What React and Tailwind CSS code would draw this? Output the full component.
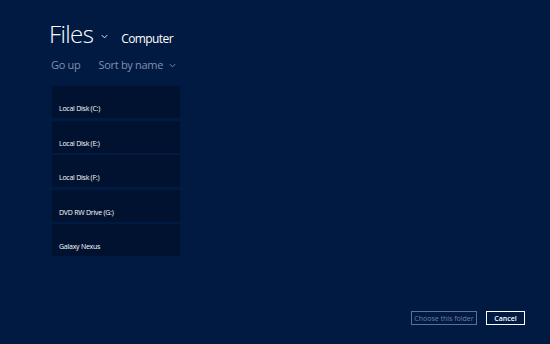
export default function App() {
  const items = ["Local Disk (C:)", "Local Disk (E:)", "Local Disk (F:)", "DVD RW Drive (G:)", "Galaxy Nexus"];
  const Chev = ({ c = "w-[9px] h-[9px]" }) => (
    <svg viewBox="0 0 10 10" className={c} fill="none" stroke="currentColor" strokeWidth="1">
      <path d="M2 3.5 L5 6.5 L8 3.5" />
    </svg>
  );
  return (
    <div className="w-[550px] h-[344px] bg-[#011a42] flex flex-col overflow-hidden" style={{ fontFamily: '"Open Sans", "Noto Sans", sans-serif' }}>
      <div className="flex items-end pl-[49px] pt-[15px] h-[46px]">
        <span className="text-[24px] font-light text-white leading-none tracking-[-0.6px]">Files</span>
        <span className="text-white ml-[7px] mb-[5px]"><Chev c="w-[9px] h-[9px]" /></span>
        <span className="text-[12px] text-white ml-[12px] mb-[1px] leading-none tracking-[-0.6px]">Computer</span>
      </div>
      <div className="flex items-center pl-[51px] mt-[13px] text-[11px] text-[#8090b0] leading-none tracking-[-0.3px]">
        <span>Go up</span>
        <span className="ml-[18px]">Sort by name</span>
        <span className="ml-[5px] mt-[2px]"><Chev /></span>
      </div>
      <div className="flex flex-col gap-[2.5px] ml-[52px] mt-[16px] w-[128px]">
        {items.map((t) => (
          <div key={t} className="h-[32px] bg-[#00122f] flex items-end pl-[7px] pb-[6px]">
            <span className="text-[7px] text-white leading-none tracking-[-0.25px]">{t}</span>
          </div>
        ))}
      </div>
      <div className="flex-1" />
      <div className="flex justify-end pr-[25px] pb-[19px] gap-[9px]">
        <div className="w-[66px] h-[14px] border border-[#5f6f92] text-[#6f7f9f] text-[7px] flex items-center justify-center leading-none">Choose this folder</div>
        <div className="w-[39px] h-[14px] border border-white text-white text-[7px] font-semibold flex items-center justify-center leading-none">Cancel</div>
      </div>
    </div>
  );
}
